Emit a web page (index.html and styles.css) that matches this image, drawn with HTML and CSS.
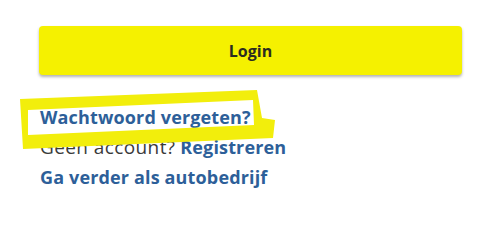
FILE: index.html
```html
<!DOCTYPE html>
<html lang="nl">
<head>
<meta charset="utf-8">
<title>Login</title>
<link rel="stylesheet" href="styles.css">
</head>
<body>
<main class="panel">
  <button class="login-btn" type="button">Login</button>
  <div class="links">
    <a class="link forgot" href="#">Wachtwoord vergeten?</a>
    <p class="line"><span class="muted">Geen account?</span> <a class="link" href="#">Registreren</a></p>
    <a class="link" href="#">Ga verder als autobedrijf</a>
    <svg class="marker" width="491" height="220" viewBox="0 0 491 220" aria-hidden="true">
      <path fill="#f2ee0c" fill-rule="evenodd" d="M20 99 L257 90 L262 118 L275 120 L273 138 L23 149 Z M28 110 L253 100 L254 125 L28 135 Z"/>
    </svg>
  </div>
</main>
</body>
</html>
```

FILE: styles.css
```css
html, body {
  margin: 0;
  padding: 0;
  background: #ffffff;
}
body {
  font-family: "Open Sans", "Lato", sans-serif;
  width: 491px;
  height: 220px;
  overflow: hidden;
}
.panel {
  padding: 26px 0 0 39px;
  width: 423px;
}
.login-btn {
  display: flex;
  align-items: center;
  justify-content: center;
  width: 423px;
  height: 49px;
  border: none;
  border-radius: 4px;
  background: #f5f100;
  box-shadow: 0 2px 3px rgba(0,0,0,0.3);
  font-family: inherit;
  font-weight: 700;
  font-size: 16px;
  color: #2b2b20;
  cursor: pointer;
}
.links {
  margin-top: 27px;
  display: flex;
  flex-direction: column;
  align-items: flex-start;
  padding-left: 1px;
}
.link, .line {
  display: block;
  margin: 0;
  line-height: 30px;
  font-size: 18px;
  font-weight: 700;
  letter-spacing: 0.15px;
  color: #2d5f99;
  text-decoration: none;
}
.line .link { display: inline; }
.muted {
  font-weight: 400;
  font-size: 19px;
  letter-spacing: 0.4px;
  color: #3a3a3a;
}
.marker {
  position: absolute;
  left: 0;
  top: 0;
  pointer-events: none;
}
```
